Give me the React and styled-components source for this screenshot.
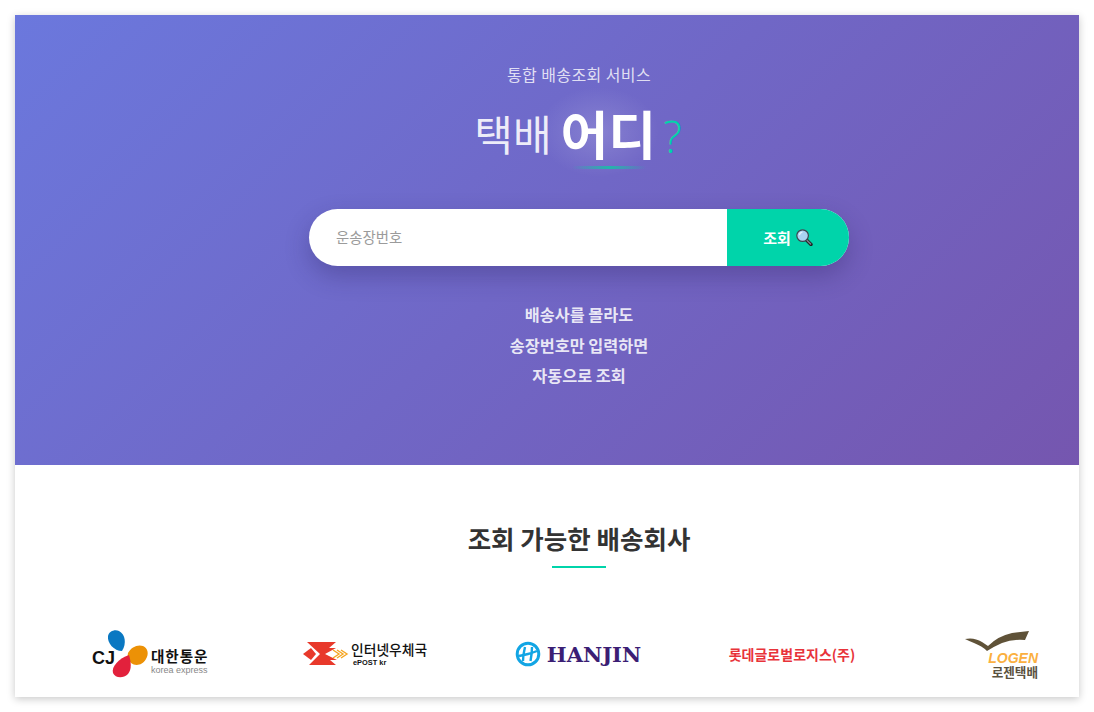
import React from "react";
import styled, { createGlobalStyle } from "styled-components";

const KR = `"Noto Sans CJK KR", "Noto Sans", sans-serif`;

const GlobalStyle = createGlobalStyle`
  html, body {
    margin: 0;
    background: #ffffff;
    font-family: ${KR};
  }
  * {
    box-sizing: border-box;
  }
`;

export default function App() {
  return (
    <Page>
      <GlobalStyle />
      <Card>
        <Hero>
          <Subtitle>통합 배송조회 서비스</Subtitle>
          <Title>
            <TitleLight>택배</TitleLight>
            <TitleStrong>어디</TitleStrong>
            <TitleMark>?</TitleMark>
          </Title>
          <SearchForm onSubmit={(e) => e.preventDefault()}>
            <SearchInput type="text" placeholder="운송장번호" />
            <SearchButton type="submit">
              조회
              <MagnifierIcon />
            </SearchButton>
          </SearchForm>
          <Notes>
            <p>배송사를 몰라도</p>
            <p>송장번호만 입력하면</p>
            <p>자동으로 조회</p>
          </Notes>
        </Hero>
        <Carriers>
          <SectionTitle>조회 가능한 배송회사</SectionTitle>
          <SectionRule />
          <LogoRow>
            <LogoCell>
              <CjLogo />
            </LogoCell>
            <LogoCell>
              <EpostLogo />
            </LogoCell>
            <LogoCell>
              <HanjinLogo />
            </LogoCell>
            <LogoCell>
              <LotteName>롯데글로벌로지스(주)</LotteName>
            </LogoCell>
            <LogoCell>
              <LogenLogo />
            </LogoCell>
          </LogoRow>
        </Carriers>
      </Card>
    </Page>
  );
}

function MagnifierIcon() {
  return (
    <svg width="17" height="17" viewBox="0 0 17 17">
      <path d="M10 10.5 L15 15.5" stroke="#222" strokeWidth="3.4" strokeLinecap="round" />
      <path d="M10.6 11 L14.6 15" stroke="#7b8794" strokeWidth="1.4" strokeLinecap="round" />
      <circle cx="6.6" cy="6.6" r="5.8" fill="#a9d3f2" stroke="#3b4650" strokeWidth="1.2" />
      <path d="M3.4 6.2 Q3.8 3.6 6.4 3.2" fill="none" stroke="#e6f4fd" strokeWidth="1.3" />
    </svg>
  );
}

function CjLogo() {
  return (
    <LogoStack>
      <svg width="120" height="50" viewBox="0 0 120 50">
        <path d="M32 22 C24 22 17 14 18 7 C19 2 25 0 29 2 C35 5 37 14 32 22Z" fill="#0a78c2" />
        <path d="M38 24 C41 18 48 15 53 17 C58 19 59 25 56 30 C52 37 45 37 41 34 C38 31 37 27 38 24Z" fill="#ec9106" />
        <path d="M39 26 C41 33 42 40 38 45 C33 50 25 49 23 44 C21 38 29 29 39 26Z" fill="#e2213c" />
        <text x="2" y="35" fontFamily="Liberation Sans, sans-serif" fontWeight="700" fontSize="18" fill="#111">
          CJ
        </text>
        <text x="61" y="33" fontFamily={KR} fontWeight="700" fontSize="14.6" letterSpacing="0.9" fill="#111">
          대한통운
        </text>
        <text x="61" y="44" fontFamily="Liberation Sans, sans-serif" fontSize="9" fill="#888">
          korea express
        </text>
      </svg>
    </LogoStack>
  );
}

function EpostLogo() {
  return (
    <EpostStack>
      <svg width="130" height="34" viewBox="0 -4 130 34">
        <path d="M4 1 H33 L26 7 H33 L22 13 L34 19 H27 L33 24 H6 L17 13 Z" fill="#e8392b" />
        <path d="M0 13 L8 7 L13 13 L8 19 Z" fill="#e8392b" />
        <path d="M30 9 L36 13 L30 17 M34 9 L40 13 L34 17 M38 9 L44 13 L38 17" fill="none" stroke="#f5a623" strokeWidth="1.4" />
        <text x="48" y="14" fontFamily={KR} fontWeight="500" fontSize="13.8" fill="#111">
          인터넷우체국
        </text>
        <text x="50" y="24" fontFamily="Liberation Sans, sans-serif" fontWeight="700" fontSize="7.4" fill="#111">
          ePOST kr
        </text>
      </svg>
    </EpostStack>
  );
}

function HanjinLogo() {
  return (
    <HanjinWrap>
      <svg width="26" height="26" viewBox="0 0 26 26">
        <circle cx="13" cy="13" r="10.8" fill="none" stroke="#12a5e4" strokeWidth="3" />
        <path
          d="M10 6 Q8 14 8 20 M17 6 Q17 12 15.5 20 M4 15 Q9 14 13 13 T22 10"
          fill="none"
          stroke="#12a5e4"
          strokeWidth="2.4"
        />
      </svg>
      <HanjinName>HANJIN</HanjinName>
    </HanjinWrap>
  );
}

function LogenLogo() {
  return (
    <LogenWrap>
      <BirdMark width="65" height="21" viewBox="0 0 65 21">
        <path
          d="M0 8 Q9 6 17 11 L23 15 Q33 5 47 2 L64 0 L60 9 Q47 8 37 12 Q30 15 22 20 Q17 15 9 12 Q4 10 0 8Z"
          fill="#5f5238"
        />
      </BirdMark>
      <LogenName>LOGEN</LogenName>
      <LogenKorean>로젠택배</LogenKorean>
    </LogenWrap>
  );
}

const Page = styled.div`
  padding: 15px;
  min-height: 712px;
`;

const Card = styled.div`
  width: 1064px;
  height: 682px;
  background: #ffffff;
  box-shadow: 0 2px 8px rgba(0, 0, 0, 0.22);
  overflow: hidden;
`;

const Hero = styled.section`
  height: 450px;
  padding: 48px 0 0 64px;
  display: flex;
  flex-direction: column;
  align-items: center;
  background: linear-gradient(135deg, #6b78dd 0%, #7556af 100%);
`;

const Subtitle = styled.div`
  font-size: 16px;
  line-height: 22px;
  letter-spacing: 0.4px;
  color: rgba(255, 255, 255, 0.8);
`;

const Title = styled.h1`
  margin: 14px 0 0;
  padding-right: 2px;
  height: 66px;
  display: flex;
  align-items: center;
  gap: 9px;
  font-weight: 400;
  position: relative;

  &::before {
    content: "";
    position: absolute;
    left: 65px;
    top: -12px;
    width: 120px;
    height: 90px;
    background: radial-gradient(closest-side, rgba(255, 255, 255, 0.16), rgba(255, 255, 255, 0));
  }

  &::after {
    content: "";
    position: absolute;
    left: 98px;
    bottom: -4px;
    width: 74px;
    height: 3px;
    border-radius: 2px;
    background: linear-gradient(90deg, rgba(0, 212, 170, 0), #23b5ab 50%, rgba(0, 212, 170, 0));
  }
`;

const TitleLight = styled.span`
  position: relative;
  font-size: 42px;
  font-weight: 400;
  color: rgba(255, 255, 255, 0.88);
`;

const TitleStrong = styled.span`
  position: relative;
  font-size: 52px;
  font-weight: 700;
  color: #ffffff;
`;

const TitleMark = styled.span`
  margin-left: -2px;
  font-family: "Open Sans", sans-serif;
  font-size: 44px;
  font-weight: 300;
  color: #00d4aa;
  position: relative;
  top: 4px;
`;

const SearchForm = styled.form`
  margin-top: 44px;
  width: 540px;
  height: 57px;
  display: flex;
  border-radius: 29px;
  overflow: hidden;
  background: #ffffff;
  box-shadow: 0 10px 24px rgba(40, 30, 90, 0.3);
`;

const SearchInput = styled.input`
  flex: 1;
  min-width: 0;
  border: 0;
  outline: 0;
  padding: 0 27px 3px;
  font-family: ${KR};
  font-size: 14.4px;
  color: #333333;
  background: transparent;

  &::placeholder {
    color: #9b9b9b;
    opacity: 1;
  }
`;

const SearchButton = styled.button`
  width: 122px;
  border: 0;
  display: flex;
  align-items: center;
  justify-content: center;
  gap: 5px;
  padding: 0;
  background: #00d4aa;
  font-family: ${KR};
  font-size: 15px;
  font-weight: 700;
  color: #ffffff;
`;

const Notes = styled.div`
  margin-top: 33px;
  text-align: center;
  font-size: 16.3px;
  font-weight: 700;
  line-height: 30.5px;
  color: rgba(255, 255, 255, 0.85);

  p {
    margin: 0;
  }
`;

const Carriers = styled.section`
  height: 232px;
  padding-top: 55px;
  display: flex;
  flex-direction: column;
`;

const SectionTitle = styled.h2`
  margin: 0;
  padding-left: 64px;
  text-align: center;
  font-size: 25.5px;
  line-height: 36px;
  font-weight: 700;
  color: #333333;
`;

const SectionRule = styled.div`
  width: 54px;
  height: 2px;
  margin: 10px 0 0 537px;
  background: #00d4aa;
`;

const LogoRow = styled.div`
  margin-top: 60px;
  padding-left: 28px;
  display: grid;
  grid-template-columns: repeat(5, 213px);
`;

const LogoCell = styled.div`
  height: 52px;
  display: flex;
  align-items: center;
  justify-content: center;
`;

const LogoStack = styled.div`
  display: flex;
  align-items: center;
`;

const EpostStack = styled(LogoStack)`
  margin-left: 10px;
`;

const HanjinWrap = styled.div`
  display: flex;
  align-items: center;
  gap: 6px;
  margin-left: 5px;
`;

const HanjinName = styled.span`
  font-family: "DejaVu Serif", serif;
  font-size: 21px;
  font-weight: 700;
  color: #3b1e74;
`;

const LotteName = styled.span`
  margin-left: 7px;
  font-size: 14px;
  font-weight: 700;
  color: #e8333a;
`;

const LogenWrap = styled.div`
  display: flex;
  flex-direction: column;
  align-items: flex-end;
  padding-top: 2px;
`;

const BirdMark = styled.svg`
  margin-right: 8px;
`;

const LogenName = styled.span`
  font-family: "Liberation Sans", sans-serif;
  font-size: 14px;
  line-height: 13px;
  font-weight: 700;
  font-style: italic;
  color: #fbb040;
`;

const LogenKorean = styled.span`
  font-size: 12.6px;
  line-height: 14px;
  font-weight: 700;
  color: #5a5240;
`;
